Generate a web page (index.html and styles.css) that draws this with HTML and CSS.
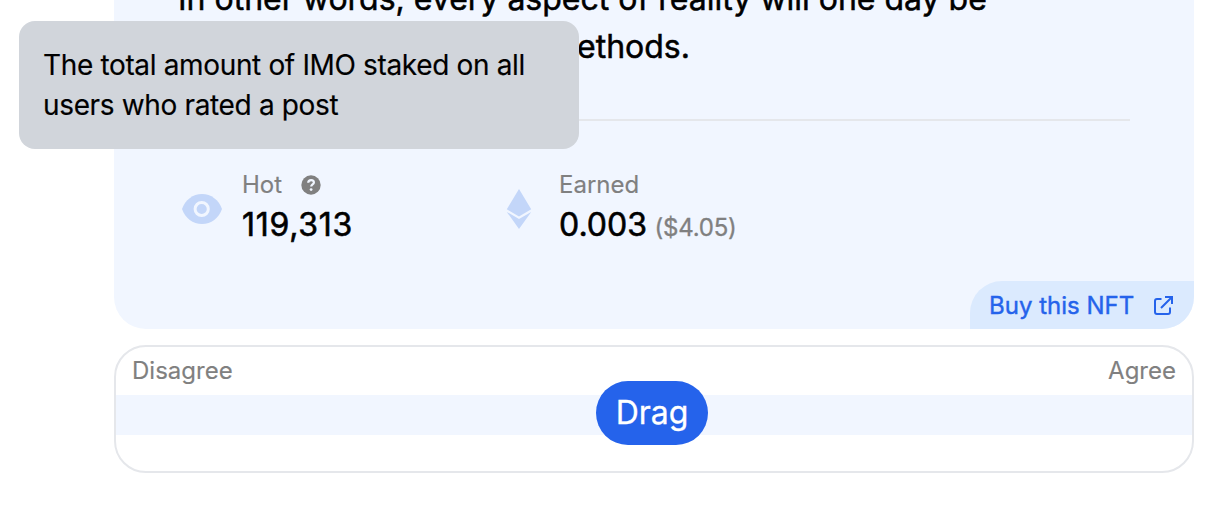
FILE: index.html
```html
<!DOCTYPE html>
<html lang="en">
<head>
<meta charset="utf-8">
<title>Post</title>
<link rel="stylesheet" href="styles.css">
</head>
<body>
<div class="page">
    <div class="card">
        <div class="post">
            <div class="post-line">In other words, every aspect of reality will one day be</div>
            <div class="post-line post-last">methods.</div>
        </div>
        <div class="stats">
            <div class="stat">
                <svg class="stat-icon" viewBox="0 0 40 40">
                    <path d="M0 20C3.200 11 10.800 5 20 5s16.800 6 20 15c-3.200 9-10.800 15-20 15S3.200 29 0 20z" fill="#c3d6f9"/>
                    <circle cx="19.700" cy="20" r="6.600" fill="#c3d6f9" stroke="#f1f6ff" stroke-width="3"/>
                </svg>
                <div class="stat-text">
                    <div class="label">Hot
                        <svg class="help" viewBox="0 0 20 20">
                            <circle cx="10" cy="10" r="9.700" fill="#808080"/>
                            <path d="M7.200 7.800C7.300 6 8.500 5.100 10.100 5.100c1.700 0 2.800 1 2.800 2.400 0 2-2.700 2-2.700 4.100" fill="none" stroke="#f1f6ff" stroke-width="2.200"/>
                            <circle cx="10.100" cy="14.600" r="1.400" fill="#f1f6ff"/>
                        </svg>
                    </div>
                    <div class="value value-hot">119,313</div>
                </div>
            </div>
            <div class="stat">
                <svg class="stat-icon" viewBox="0 0 40 40">
                    <path d="M20 0l12.200 20.300L20 27.500 7.800 20.300z" fill="#c3d6f9"/>
                    <path d="M7.800 22.900L20 30l12.200-7.100L20 40z" fill="#c3d6f9"/>
                </svg>
                <div class="stat-text">
                    <div class="label">Earned</div>
                    <div class="value">0.003 <span class="usd">($4.05)</span></div>
                </div>
            </div>
        </div>
        <a class="buy">Buy this NFT
            <svg class="buy-icon" viewBox="0 0 20 20" fill="none" stroke="#2563eb" stroke-width="2">
                <path d="M8.500 4H4Q2 4 2 6V17Q2 19 4 19H15Q17 19 17 17V12.500"/>
                <path d="M12 2H19V9M19 2L8 13"/>
            </svg>
        </a>
    </div>
    <div class="rate">
        <div class="rate-labels"><span>Disagree</span><span>Agree</span></div>
        <div class="track"><div class="thumb">Drag</div></div>
    </div>
    <div class="tooltip">The total amount of IMO staked on all users who rated a post</div>
</div>
</body>
</html>
```
FILE: styles.css
```css
html, body {
    margin: 0;
    height: 100%;
    overflow: hidden;
}
body {
    background: #fff;
    color: #000;
    font-family: Inter, "Liberation Sans", sans-serif;
    font-size: 24px;
    -webkit-text-stroke: 0.15px;
}
.page {
    display: flow-root;
    position: relative;
    height: 100%;
    padding: 0 36px 0 114px;
}
.card {
    display: flex;
    flex-direction: column;
    box-sizing: border-box;
    height: 354px;
    margin-top: -25px;
    padding: 0 64px;
    border-radius: 0 0 32px 32px;
    background: #f1f6ff;
    overflow: hidden;
}
.post {
    padding-bottom: 48px;
    border-bottom: 2px solid #e5e7eb;
    font-size: 32px;
    line-height: 48px;
    white-space: nowrap;
    -webkit-text-stroke: 0.5px;
}
.post-last {
    padding-left: 371px;
}
.stats {
    display: flex;
    margin-top: 48px;
}
.stat {
    display: flex;
    align-items: center;
    width: 317px;
    height: 80px;
    padding-left: 4px;
    box-sizing: border-box;
}
.stat-icon {
    width: 40px;
    height: 40px;
    margin-right: 20px;
}
.label {
    display: flex;
    align-items: center;
    color: #808080;
    height: 32px;
    line-height: 32px;
}
.help {
    width: 20px;
    height: 20px;
    margin-left: 19px;
}
.value {
    height: 48px;
    font-size: 32px;
    line-height: 48px;
    white-space: nowrap;
    -webkit-text-stroke: 0.6px;
}
.value-hot {
    letter-spacing: 0.7px;
}
.usd {
    margin-left: -1.5px;
    color: #808080;
    font-size: 24px;
    letter-spacing: -0.2px;
    -webkit-text-stroke: 0.3px;
}
.buy {
    display: flex;
    align-items: center;
    align-self: flex-end;
    box-sizing: border-box;
    width: 224px;
    height: 48px;
    margin: auto -64px 0 0;
    padding-left: 19px;
    border-top-left-radius: 32px;
    background: #dbeafe;
    color: #2563eb;
    -webkit-text-stroke: 0.4px;
}
.buy-icon {
    width: 20px;
    height: 20px;
    margin-left: 18.5px;
}
.rate {
    box-sizing: border-box;
    height: 128px;
    margin-top: 16px;
    border: 2px solid #e5e7eb;
    border-radius: 32px;
}
.rate-labels {
    display: flex;
    justify-content: space-between;
    height: 48px;
    padding: 0 16px;
    color: #808080;
    line-height: 48px;
}
.track {
    display: flex;
    align-items: center;
    height: 40px;
    padding-left: 480px;
    background: #f1f6ff;
}
.thumb {
    width: 112px;
    height: 64px;
    flex: none;
    margin-bottom: 4px;
    border-radius: 32px;
    background: #2563eb;
    color: #fff;
    font-size: 32px;
    line-height: 64px;
    text-align: center;
    -webkit-text-stroke: 0.3px;
}
.tooltip {
    position: absolute;
    left: 19px;
    top: 21px;
    box-sizing: border-box;
    width: 560px;
    height: 128px;
    padding: 24px;
    border-radius: 16px;
    background: #d1d5db;
    font-size: 28px;
    letter-spacing: -0.35px;
    line-height: 40px;
}
```
